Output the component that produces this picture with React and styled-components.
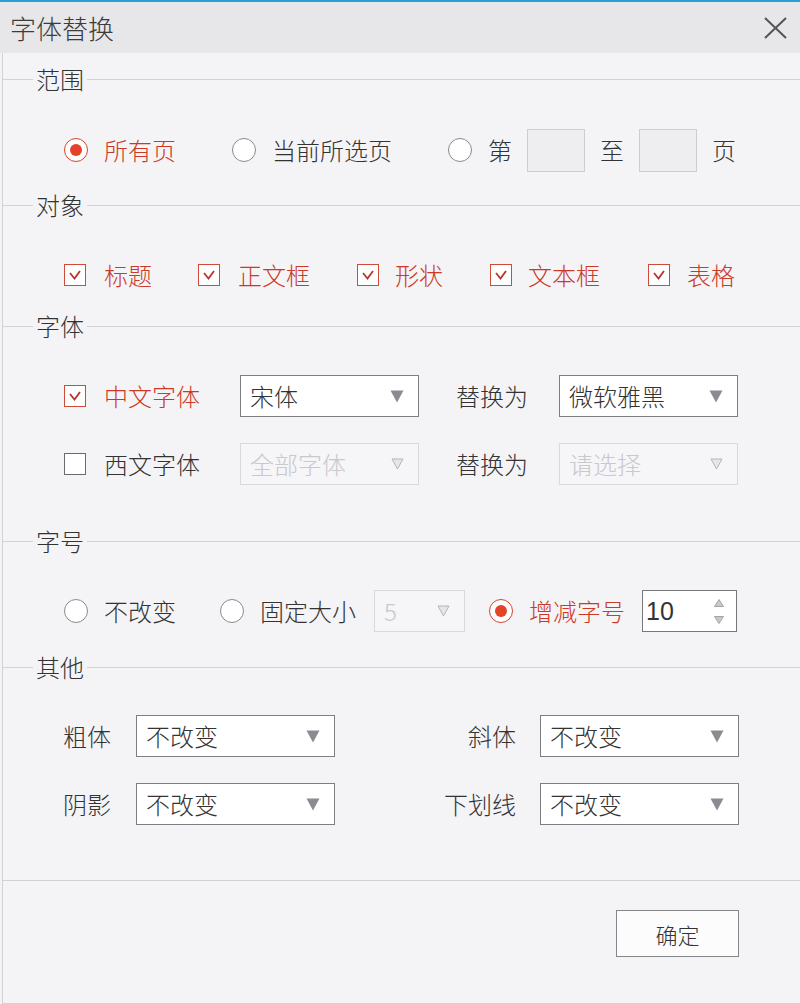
import styled, { createGlobalStyle } from "styled-components";

const GlobalStyle = createGlobalStyle`
  html, body {
    margin: 0;
    padding: 0;
    background: #f3f2f5;
  }
  body {
    font-family: "Noto Sans CJK SC", "Microsoft YaHei", sans-serif;
    font-weight: 300;
    color: #333;
  }
`;

const RED = "#cc3a26";

const Dialog = styled.div`
  width: 800px;
  height: 1004px;
  display: flex;
  flex-direction: column;
  background: #f3f2f5;
  overflow: hidden;
`;

const TitleBar = styled.header`
  height: 51px;
  flex: 0 0 51px;
  border-top: 2px solid #2a9fd4;
  background: #e7e6e9;
  display: flex;
  align-items: center;
  justify-content: space-between;
  padding: 0 13px 0 10px;
`;

const Title = styled.h1`
  margin: 0;
  font-size: 26px;
  font-weight: 300;
  line-height: 1;
  color: #3c3c3c;
`;

const CloseButton = styled.button`
  width: 24px;
  height: 24px;
  padding: 0;
  border: none;
  background: none;
  display: flex;
  align-items: center;
  justify-content: center;
`;

const Body = styled.main`
  flex: 1;
  margin-left: 2px;
  border-left: 1px solid #d2d1d4;
  border-bottom: 1px solid #d2d1d4;
  padding-top: 12px;
  display: flex;
  flex-direction: column;
  background: #f4f3f6;
`;

const SectionHeader = styled.div`
  height: 28px;
  display: flex;
  align-items: center;
  font-size: 24px;
  line-height: 1;
  color: #333;

  &::before,
  &::after {
    content: "";
    height: 1px;
    background: #d3d2d6;
  }
  &::before {
    flex: 0 0 30px;
    margin-right: 3px;
  }
  &::after {
    flex: 1;
    margin-left: 3px;
  }
`;

const SectionBody = styled.div`
  padding: ${(p) => p.$pt}px 0 ${(p) => p.$pb}px;
  display: flex;
  flex-direction: column;
  gap: 26px;
`;

const Row = styled.div`
  height: ${(p) => p.$h || 44}px;
  display: flex;
  align-items: center;
  padding-left: 61px;
`;

// object checkboxes sit on fixed column starts, like the original dialog
const CheckGrid = styled.div`
  height: 44px;
  display: grid;
  grid-template-columns: 134px 159px 133px 158px auto;
  align-items: center;
  padding-left: 61px;
`;

const Option = styled.label`
  display: inline-flex;
  flex: 0 0 auto;
  align-items: center;
  gap: ${(p) => p.$gap || 16}px;
  margin-right: ${(p) => p.$mr || 0}px;
  font-size: 24px;
  line-height: 1;
  color: ${(p) => (p.$on ? RED : "#333")};
  white-space: nowrap;
`;

const RadioDot = styled.span`
  width: 24px;
  height: 24px;
  flex: 0 0 24px;
  box-sizing: border-box;
  border-radius: 50%;
  border: 1.5px solid ${(p) => (p.$on ? "#d9432d" : "#8a8a8e")};
  background: #fff;
  display: flex;
  align-items: center;
  justify-content: center;

  &::after {
    content: "";
    width: 12px;
    height: 12px;
    border-radius: 50%;
    background: ${(p) => (p.$on ? "#e4432a" : "transparent")};
  }
`;

const Box = styled.span`
  width: 22px;
  height: 22px;
  flex: 0 0 22px;
  box-sizing: border-box;
  border: 1.5px solid ${(p) => (p.$on ? "#d04a38" : "#6a6a6e")};
  background: #fff;
  display: flex;
  align-items: center;
  justify-content: center;
`;

const Radio = ({ on, children, mr }) => (
  <Option $on={on} $mr={mr}>
    <RadioDot $on={on} />
    {children}
  </Option>
);

const Check = ({ on, children, mr, gap = 17 }) => (
  <Option $on={on} $mr={mr} $gap={gap}>
    <Box $on={on}>
      {on && (
        <svg width="14" height="12" viewBox="0 0 14 12">
          <path d="M2 4 L6.5 9.5 L12 2" fill="none" stroke="#b8342a" strokeWidth="1.8" />
        </svg>
      )}
    </Box>
    {children}
  </Option>
);

const Text = styled.span`
  font-size: 24px;
  line-height: 1;
  color: #333;
  margin: 0 ${(p) => p.$mr || 0}px 0 ${(p) => p.$ml || 0}px;
  white-space: nowrap;
`;

const PageBox = styled.span`
  width: 58px;
  height: 43px;
  flex: 0 0 58px;
  box-sizing: border-box;
  border: 1px solid #cdccd0;
  background: #eeedf0;
  margin: 0 15px;
`;

const SelectBox = styled.div`
  width: ${(p) => p.$w}px;
  height: 42px;
  box-sizing: border-box;
  flex: 0 0 auto;
  border: 1px solid ${(p) => (p.$off ? "#d9d8dc" : "#7e7e82")};
  background: ${(p) => (p.$off ? "#f6f5f8" : "#fff")};
  color: ${(p) => (p.$off ? "#c9c8cc" : "#333")};
  margin: 0 ${(p) => p.$mr || 0}px 0 ${(p) => p.$ml || 0}px;
  padding: 0 14px 0 9px;
  display: flex;
  align-items: center;
  justify-content: space-between;
  font-size: 24px;
  line-height: 1;
`;

const Arrow = ({ off }) =>
  off ? (
    <svg width="13" height="12" viewBox="0 0 13 12">
      <path d="M1 1 H12 L6.5 11 Z" fill="#e6e5ea" stroke="#b5b4ba" strokeWidth="1" />
    </svg>
  ) : (
    <svg width="14" height="13" viewBox="0 0 14 13">
      <path d="M0.5 0.5 H13.5 L7 12.5 Z" fill="#8c8b91" />
    </svg>
  );

const Select = ({ w, off, ml, mr, children }) => (
  <SelectBox $w={w} $off={off} $ml={ml} $mr={mr}>
    <span>{children}</span>
    <Arrow off={off} />
  </SelectBox>
);

const Spin = styled.div`
  width: 95px;
  height: 42px;
  flex: 0 0 95px;
  box-sizing: border-box;
  border: 1px solid #77777b;
  background: #fff;
  margin-left: 17px;
  padding: 0 12px 0 3px;
  display: flex;
  align-items: center;
  justify-content: space-between;
  font-family: "Liberation Sans", "Noto Sans CJK SC", sans-serif;
  font-weight: 400;
  font-size: 25px;
  color: #333;
`;

const SpinArrows = styled.span`
  display: flex;
  flex-direction: column;
  gap: 9px;
`;

const OtherGrid = styled.div`
  display: grid;
  grid-template-columns: 49px 199px 1fr 199px;
  column-gap: 24px;
  row-gap: 26px;
  padding: 0 61px 0 60px;
  align-items: center;
`;

const GridLabel = styled.span`
  font-size: 24px;
  line-height: 1;
  color: #333;
  text-align: ${(p) => (p.$right ? "right" : "left")};
  white-space: nowrap;
`;

const GridSelect = styled(SelectBox)`
  width: auto;
  margin: 0;
`;

const Footer = styled.footer`
  border-top: 1px solid #d0cfd3;
  padding: 29px 61px 0 0;
  display: flex;
  justify-content: flex-end;
`;

const Button = styled.button`
  width: 123px;
  height: 47px;
  border: 1px solid #86868a;
  background: #fcfcfd;
  font-family: inherit;
  font-weight: 300;
  font-size: 22px;
  color: #333;
  padding: 0;
`;

const App = () => {
  const others = [
    ["粗体", "斜体"],
    ["阴影", "下划线"],
  ];

  return (
    <>
      <GlobalStyle />
      <Dialog>
        <TitleBar>
          <Title>字体替换</Title>
          <CloseButton>
            <svg width="23" height="22" viewBox="0 0 23 22">
              <path d="M1 1 L22 21 M22 1 L1 21" stroke="#555" strokeWidth="2" />
            </svg>
          </CloseButton>
        </TitleBar>

        <Body>
          <SectionHeader>范围</SectionHeader>
          <SectionBody $pt={35} $pb={19}>
            <Row>
              <Radio on mr={56}>所有页</Radio>
              <Radio mr={56}>当前所选页</Radio>
              <Radio>第</Radio>
              <PageBox />
              <Text>至</Text>
              <PageBox />
              <Text>页</Text>
            </Row>
          </SectionBody>

          <SectionHeader>对象</SectionHeader>
          <SectionBody $pt={34} $pb={15}>
            <CheckGrid>
              <Check on gap={18}>标题</Check>
              <Check on gap={18}>正文框</Check>
              <Check on gap={16}>形状</Check>
              <Check on gap={16}>文本框</Check>
              <Check on gap={17}>表格</Check>
            </CheckGrid>
          </SectionBody>

          <SectionHeader>字体</SectionHeader>
          <SectionBody $pt={35} $pb={42}>
            <Row $h={42}>
              <Check on gap={18}>中文字体</Check>
              <Select w={179} ml={40} mr={37}>宋体</Select>
              <Text $mr={31}>替换为</Text>
              <Select w={179}>微软雅黑</Select>
            </Row>
            <Row $h={42}>
              <Check gap={18}>西文字体</Check>
              <Select w={179} off ml={40} mr={37}>全部字体</Select>
              <Text $mr={31}>替换为</Text>
              <Select w={179} off>请选择</Select>
            </Row>
          </SectionBody>

          <SectionHeader>字号</SectionHeader>
          <SectionBody $pt={34} $pb={20}>
            <Row>
              <Radio mr={44}>不改变</Radio>
              <Radio mr={18}>固定大小</Radio>
              <Select w={91} off mr={24}>5</Select>
              <Radio on>增减字号</Radio>
              <Spin>
                10
                <SpinArrows>
                  <svg width="10" height="8" viewBox="0 0 10 8">
                    <path d="M5 0.5 L9.5 7.5 H0.5 Z" fill="#c9c8cd" stroke="#a3a2a8" strokeWidth="1" />
                  </svg>
                  <svg width="10" height="8" viewBox="0 0 10 8">
                    <path d="M0.5 0.5 H9.5 L5 7.5 Z" fill="#c9c8cd" stroke="#a3a2a8" strokeWidth="1" />
                  </svg>
                </SpinArrows>
              </Spin>
            </Row>
          </SectionBody>

          <SectionHeader>其他</SectionHeader>
          <SectionBody $pt={34} $pb={55}>
            <OtherGrid>
              {others.map(([a, b]) => [
                <GridLabel key={a}>{a}</GridLabel>,
                <GridSelect key={a + "s"}>
                  <span>不改变</span>
                  <Arrow />
                </GridSelect>,
                <GridLabel key={b} $right>{b}</GridLabel>,
                <GridSelect key={b + "s"}>
                  <span>不改变</span>
                  <Arrow />
                </GridSelect>,
              ])}
            </OtherGrid>
          </SectionBody>

          <Footer>
            <Button>确定</Button>
          </Footer>
        </Body>
      </Dialog>
    </>
  );
};

export default App;
